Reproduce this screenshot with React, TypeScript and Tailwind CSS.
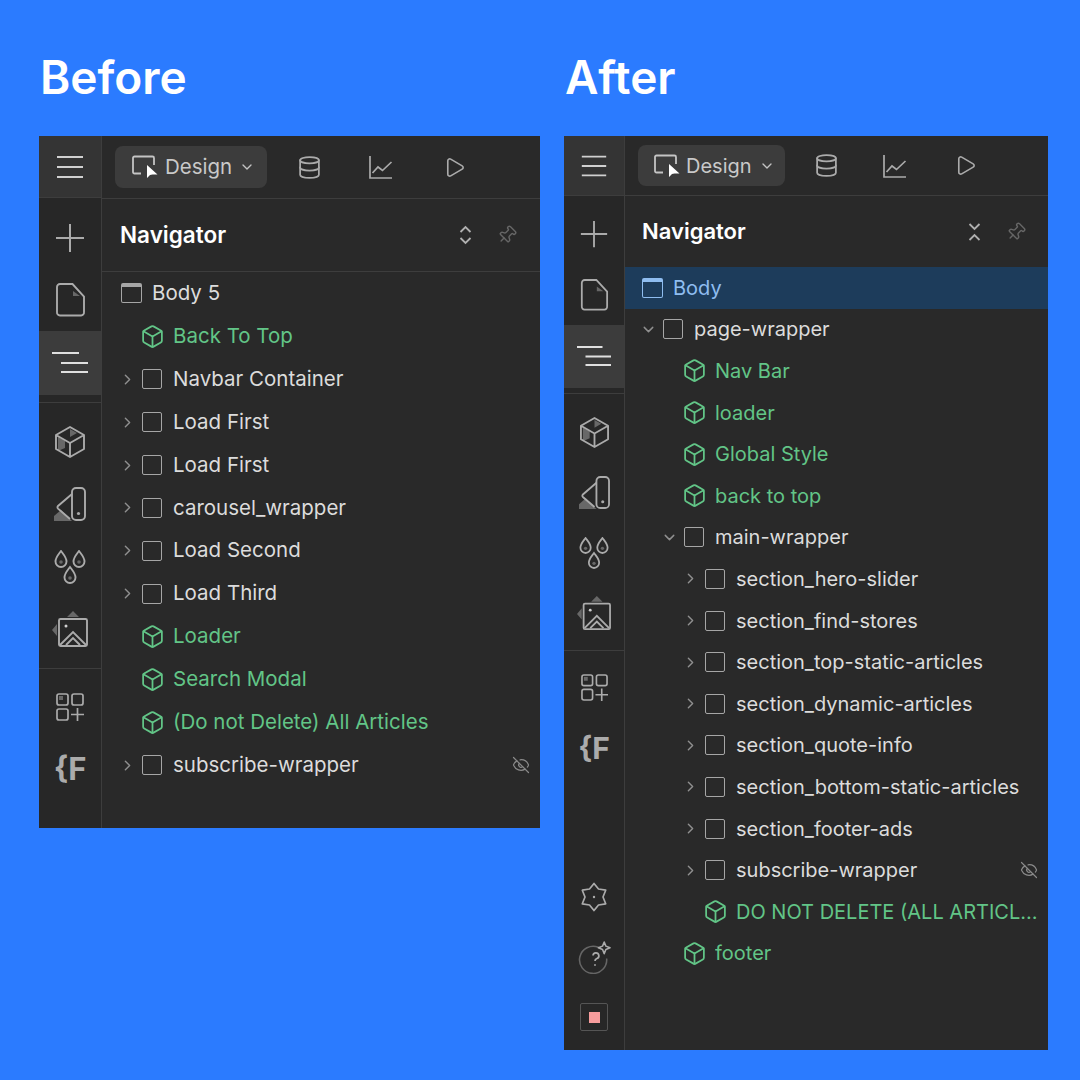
import { Box, ChevronDown, ChevronRight, Database, EyeOff, Pin, Play } from "lucide-react";

type IconProps = { className?: string };

const shade = "#686868";
const line = "#ababab";

const Hamburger = ({ className }: IconProps) => (
	<svg className={className} viewBox="0 0 32 32" fill="none" stroke="#d0d0d0" strokeWidth="2">
		<path d="M3 6h26M3 16h26M3 26h26" />
	</svg>
);

const PlusIcon = ({ className }: IconProps) => (
	<svg className={className} viewBox="0 0 32 32" fill="none" stroke={line} strokeWidth="2">
		<path d="M16 2v28M2 16h28" />
	</svg>
);

const PageIcon = ({ className }: IconProps) => (
	<svg className={className} viewBox="0 0 32 34" fill="none" stroke={line} strokeWidth="1.9">
		<path d="M19 8v5h7z" fill={shade} stroke="none" />
		<path d="M6 1h12.5L30 13.5V29a3 3 0 0 1-3 3.5H6A3 3 0 0 1 3 29V4a3 3 0 0 1 3-3z" />
	</svg>
);

const NavIcon = ({ className }: IconProps) => (
	<svg className={className} viewBox="0 0 36 24" fill="none" stroke="#e0e0e0" strokeWidth="2">
		<path d="M0 2h27M9 12h27M9 21h27" />
	</svg>
);

const CubeIcon = ({ className }: IconProps) => (
	<svg className={className} viewBox="0 0 32 32" fill="none" stroke={line} strokeWidth="1.9" strokeLinejoin="round">
		<path d="M16 3v8l7-4zM4 11l7 4v7l-7 3z" fill={shade} stroke="none" />
		<path d="M16 1l14 8v14l-14 8-14-8V9zM2 9l14 8 14-8M16 17v14" />
	</svg>
);

const SwatchIcon = ({ className }: IconProps) => (
	<svg className={className} viewBox="0 0 32 34" fill="none" stroke={line} strokeWidth="1.9">
		<path d="M0 34v-5l7-6 11 11z" fill={shade} stroke="none" />
		<rect x="18" y="1" width="13" height="32" rx="4" />
		<path d="M18 7L4 19a1.8 1.8 0 0 0 0 2.6L16 32" />
		<circle cx="24.5" cy="26.5" r="1.6" fill={line} stroke="none" />
	</svg>
);

const DropsIcon = ({ className }: IconProps) => {
	const drop = "M0-8C3-4 5.5-1.5 5.5 2.5a5.5 5.5 0 0 1-11 0C-5.5-1.5-3-4 0-8z";
	return (
		<svg className={className} viewBox="0 0 32 34" fill="none" stroke={line} strokeWidth="1.9">
			<path transform="translate(7 9)" d={drop} />
			<path transform="translate(25 9)" d={drop} />
			<path transform="translate(16 25)" d={drop} />
			<circle cx="7" cy="12" r="1.8" fill={shade} stroke="none" />
			<circle cx="25" cy="12" r="1.8" fill={shade} stroke="none" />
			<circle cx="16" cy="28" r="1.8" fill={shade} stroke="none" />
		</svg>
	);
};

const ImageIcon = ({ className }: IconProps) => (
	<svg className={className} viewBox="0 0 36 36" fill="none" stroke={line} strokeWidth="1.9">
		<path d="M5 13L0 19l5 6zM15 6l6-6 6 6z" fill={shade} stroke="none" />
		<rect x="7" y="8" width="28" height="27" rx="1.5" />
		<path d="M8 34l13-13 13 13M14 34l7-7 7 7" />
		<circle cx="14" cy="15" r="1.5" fill="#d0d0d0" stroke="none" />
	</svg>
);

const ComponentsIcon = ({ className }: IconProps) => (
	<svg className={className} viewBox="0 0 28 28" fill="none" stroke={line} strokeWidth="1.7">
		<path d="M3 3h4v4H3z" fill={shade} stroke="none" />
		<rect x="1" y="1" width="11" height="11" rx="2" />
		<rect x="16" y="1" width="11" height="11" rx="2" />
		<rect x="1" y="16" width="11" height="11" rx="2" />
		<path d="M15 21.5h13M21.5 15v13" />
	</svg>
);

const GearIcon = ({ className }: IconProps) => (
	<svg className={className} viewBox="-15 -15 30 30" fill="none" stroke={line} strokeWidth="1.7" strokeLinejoin="round">
		<path d="M0-13.5L4.5-8 11.7-6.8 9 0 11.7 6.8 4.5 8 0 13.5-4.5 8-11.7 6.8-9 0-11.7-6.8-4.5-8z" />
		<circle cx="0" cy="0" r="1.2" fill={line} stroke="none" />
	</svg>
);

const HelpIcon = ({ className }: IconProps) => (
	<svg className={className} viewBox="0 0 34 34" fill="none" stroke="#666666" strokeWidth="1.6">
		<path d="M21 6.5A14 14 0 1 0 29.5 18" />
		<path d="M15.5 15a3 3 0 1 1 4 3c-1.2.5-2 1.2-2 2.7M17.500 24v1.6" stroke={line} strokeWidth="1.8" />
		<path d="M27 1l1.700 4.300L33 7l-4.300 1.700L27 13l-1.700-4.300L21 7l4.300-1.700z" stroke={line} strokeLinejoin="round" />
	</svg>
);

const DesignIcon = ({ className }: IconProps) => (
	<svg className={className} viewBox="0 0 26 24" fill="none" stroke="#c4c4c4" strokeWidth="1.8">
		<path d="M9 18.500H2.500a1.500 1.500 0 0 1-1.500-1.500V3a1.500 1.500 0 0 1 1.500-1.500h18A1.500 1.500 0 0 1 22 3v7" />
		<path d="M15 10v13l3-3 2.500-.5h5z" fill="#ffffff" stroke="none" />
	</svg>
);

const ChartIcon = ({ className }: IconProps) => (
	<svg className={className} viewBox="0 0 24 24" fill="none" stroke={line} strokeWidth="1.7">
		<path d="M1 1v22h22M3.500 18l5.500-6 4.500 3.500L22.500 7" />
	</svg>
);

const ExpandIcon = ({ className }: IconProps) => (
	<svg className={className} viewBox="0 0 16 20" fill="none" stroke="#b0b0b0" strokeWidth="1.8">
		<path d="M3 7l5-5 5 5M3 13l5 5 5-5" />
	</svg>
);

const CollapseIcon = ({ className }: IconProps) => (
	<svg className={className} viewBox="0 0 16 20" fill="none" stroke="#b0b0b0" strokeWidth="1.8">
		<path d="M3 2l5 5 5-5M3 18l5-5 5 5" />
	</svg>
);

const PageGlyph = ({ compact }: { compact: boolean }) => (
	<div
		className={`rounded-[2px] border-[1.5px] border-t-[4px] border-[#a6a6a6] ${
			compact ? "w-[21px] h-[20px]" : "w-[21px] h-[20px]"
		}`}
	/>
);

type Row = {
	label: string;
	depth: 0 | 1 | 2 | 3;
	kind: "body" | "box" | "symbol";
	arrow?: "right" | "down";
	hidden?: boolean;
};

const beforeRows: Row[] = [
	{ label: "Body 5", depth: 0, kind: "body" },
	{ label: "Back To Top", depth: 1, kind: "symbol" },
	{ label: "Navbar Container", depth: 1, kind: "box", arrow: "right" },
	{ label: "Load First", depth: 1, kind: "box", arrow: "right" },
	{ label: "Load First", depth: 1, kind: "box", arrow: "right" },
	{ label: "carousel_wrapper", depth: 1, kind: "box", arrow: "right" },
	{ label: "Load Second", depth: 1, kind: "box", arrow: "right" },
	{ label: "Load Third", depth: 1, kind: "box", arrow: "right" },
	{ label: "Loader", depth: 1, kind: "symbol" },
	{ label: "Search Modal", depth: 1, kind: "symbol" },
	{ label: "(Do not Delete) All Articles", depth: 1, kind: "symbol" },
	{ label: "subscribe-wrapper", depth: 1, kind: "box", arrow: "right", hidden: true },
];

const afterRows: Row[] = [
	{ label: "Body", depth: 0, kind: "body" },
	{ label: "page-wrapper", depth: 1, kind: "box", arrow: "down" },
	{ label: "Nav Bar", depth: 2, kind: "symbol" },
	{ label: "loader", depth: 2, kind: "symbol" },
	{ label: "Global Style", depth: 2, kind: "symbol" },
	{ label: "back to top", depth: 2, kind: "symbol" },
	{ label: "main-wrapper", depth: 2, kind: "box", arrow: "down" },
	{ label: "section_hero-slider", depth: 3, kind: "box", arrow: "right" },
	{ label: "section_find-stores", depth: 3, kind: "box", arrow: "right" },
	{ label: "section_top-static-articles", depth: 3, kind: "box", arrow: "right" },
	{ label: "section_dynamic-articles", depth: 3, kind: "box", arrow: "right" },
	{ label: "section_quote-info", depth: 3, kind: "box", arrow: "right" },
	{ label: "section_bottom-static-articles", depth: 3, kind: "box", arrow: "right" },
	{ label: "section_footer-ads", depth: 3, kind: "box", arrow: "right" },
	{ label: "subscribe-wrapper", depth: 3, kind: "box", arrow: "right", hidden: true },
	{ label: "DO NOT DELETE (ALL ARTICLES)", depth: 3, kind: "symbol" },
	{ label: "footer", depth: 2, kind: "symbol" },
];

const depthClass = {
	0: "pl-[16px]",
	1: "pl-[16px]",
	2: "pl-[37px]",
	3: "pl-[58px]",
};

const NavRow = ({ row, compact }: { row: Row; compact: boolean }) => {
	const active = compact && row.kind === "body";
	const textColor = active ? "text-[#8fbdf0]" : row.kind === "symbol" ? "text-[#62c587]" : "text-[#dcdcdc]";
	return (
		<div
			className={`flex items-center pr-[10px] ${compact ? "h-[41.6px] text-[20px]" : "h-[42.9px] text-[20.5px]"} ${
				compact ? depthClass[row.depth] : "pl-[18px]"
			} ${active ? "bg-[#1d3c5b]" : ""}`}
		>
			{row.depth > 0 && (
				<span className="w-[21px] shrink-0 flex items-center">
					{row.arrow === "right" && <ChevronRight size={17} strokeWidth={2} className="text-[#8f8f8f] -ml-[1px]" />}
					{row.arrow === "down" && <ChevronDown size={17} strokeWidth={2} className="text-[#8f8f8f] -ml-[1px]" />}
				</span>
			)}
			<span className="w-[22px] h-[24px] shrink-0 flex items-center justify-center">
				{row.kind === "body" && <PageGlyphColored active={active} />}
				{row.kind === "box" && <span className="w-[20px] h-[20px] border-[1.5px] border-[#a6a6a6] rounded-[2px]" />}
				{row.kind === "symbol" && <Box size={25} strokeWidth={1.7} className="text-[#62c587] shrink-0" />}
			</span>
			<span className={`ml-[10px] truncate flex-1 ${textColor}`}>{row.label}</span>
			{row.hidden && <EyeOff size={18} strokeWidth={1.6} className="text-[#8a8a8a] shrink-0" />}
		</div>
	);
};

const PageGlyphColored = ({ active }: { active: boolean }) =>
	active ? (
		<div className="w-[21px] h-[20px] rounded-[2px] border-[1.5px] border-t-[4px] border-[#8fbdf0]" />
	) : (
		<PageGlyph compact={false} />
	);

const RailBefore = () => (
	<div className="w-[63px] shrink-0 h-full flex flex-col border-r border-[#3d3d3d] bg-[#272727]">
		<div className="h-[62px] shrink-0 bg-[#343434] flex items-center justify-center border-b border-[#3d3d3d]">
			<Hamburger className="w-[32px] h-[32px]" />
		</div>
		<div className="h-[9px]" />
		<div className="h-[62px] flex items-center justify-center"><PlusIcon className="w-[32px] h-[32px]" /></div>
		<div className="h-[62px] flex items-center justify-center"><PageIcon className="w-[32px] h-[34px]" /></div>
		<div className="h-[64px] bg-[#3c3c3c] flex items-center justify-center"><NavIcon className="w-[36px] h-[24px]" /></div>
		<div className="h-[8px] border-b border-[#3d3d3d]" />
		<div className="h-[8px]" />
		<div className="h-[62px] flex items-center justify-center"><CubeIcon className="w-[32px] h-[32px]" /></div>
		<div className="h-[62px] flex items-center justify-center"><SwatchIcon className="w-[32px] h-[34px]" /></div>
		<div className="h-[63px] flex items-center justify-center"><DropsIcon className="w-[32px] h-[34px]" /></div>
		<div className="h-[62px] flex items-center justify-center"><ImageIcon className="w-[36px] h-[36px]" /></div>
		<div className="h-[9px] border-b border-[#3d3d3d]" />
		<div className="h-[7px]" />
		<div className="h-[62px] flex items-center justify-center"><ComponentsIcon className="w-[28px] h-[28px]" /></div>
		<div className="h-[62px] flex items-center justify-center font-bold text-[31px] text-[#ababab]">{"{F"}</div>
	</div>
);

const RailAfter = () => (
	<div className="w-[61px] shrink-0 h-full flex flex-col border-r border-[#3d3d3d] bg-[#272727]">
		<div className="h-[60px] shrink-0 bg-[#343434] flex items-center justify-center border-b border-[#3d3d3d]">
			<Hamburger className="w-[30px] h-[30px]" />
		</div>
		<div className="h-[8px]" />
		<div className="h-[60px] flex items-center justify-center"><PlusIcon className="w-[30px] h-[30px]" /></div>
		<div className="h-[61px] flex items-center justify-center"><PageIcon className="w-[30px] h-[32px]" /></div>
		<div className="h-[63px] bg-[#3c3c3c] flex items-center justify-center"><NavIcon className="w-[34px] h-[23px]" /></div>
		<div className="h-[6px] border-b border-[#3d3d3d]" />
		<div className="h-[8px]" />
		<div className="h-[60px] flex items-center justify-center"><CubeIcon className="w-[31px] h-[31px]" /></div>
		<div className="h-[61px] flex items-center justify-center"><SwatchIcon className="w-[31px] h-[33px]" /></div>
		<div className="h-[60px] flex items-center justify-center"><DropsIcon className="w-[30px] h-[32px]" /></div>
		<div className="h-[60px] flex items-center justify-center"><ImageIcon className="w-[34px] h-[34px]" /></div>
		<div className="h-[8px] border-b border-[#3d3d3d]" />
		<div className="h-[6px]" />
		<div className="h-[60px] flex items-center justify-center"><ComponentsIcon className="w-[27px] h-[27px]" /></div>
		<div className="h-[62px] flex items-center justify-center font-bold text-[30px] text-[#ababab]">{"{F"}</div>
		<div className="flex-1" />
		<div className="h-[60px] flex items-center justify-center"><GearIcon className="w-[30px] h-[30px]" /></div>
		<div className="h-[61px] flex items-center justify-center"><HelpIcon className="w-[33px] h-[33px]" /></div>
		<div className="h-[62px] flex items-start justify-center pt-[1px]">
			<div className="w-[28px] h-[28px] mt-[14px] rounded-[2px] border-[1.5px] border-[#555555] flex items-center justify-center">
				<div className="w-[11px] h-[11px] bg-[#f79c9c]" />
			</div>
		</div>
	</div>
);

const TopBar = ({ compact }: { compact: boolean }) => (
	<div className={`flex items-center shrink-0 border-b border-[#3d3d3d] ${compact ? "h-[60px] pl-[13px]" : "h-[63px] pl-[13px]"}`}>
		<div
			className={`flex items-center rounded-[8px] bg-[#3c3c3c] ${
				compact ? "w-[147px] h-[41px] pl-[16px]" : "w-[152px] h-[42px] pl-[17px]"
			}`}
		>
			<DesignIcon className="w-[26px] h-[24px] shrink-0" />
			<span className={`text-[#c9c9c9] ${compact ? "ml-[6px] text-[20px]" : "ml-[7px] text-[20.5px]"}`}>Design</span>
			<ChevronDown size={16} strokeWidth={2} className="ml-[7px] text-[#c4c4c4]" />
		</div>
		<Database size={25} strokeWidth={1.7} className={`text-[#ababab] ${compact ? "ml-[29px]" : "ml-[30px]"}`} />
		<ChartIcon className={`w-[24px] h-[24px] ${compact ? "ml-[44px]" : "ml-[47px]"}`} />
		<Play size={23} strokeWidth={1.7} className={`text-[#ababab] ${compact ? "ml-[47px]" : "ml-[50px]"}`} />
	</div>
);

const Header = ({ compact }: { compact: boolean }) => (
	<div
		className={`flex items-center justify-between shrink-0 ${
			compact ? "h-[71px] pl-[17px] pr-[22px]" : "h-[73px] pl-[18px] pr-[23px] border-b border-[#3d3d3d]"
		}`}
	>
		<span className={`font-semibold text-white ${compact ? "text-[22px]" : "text-[22.5px]"}`}>Navigator</span>
		<div className="flex items-center gap-[23px]">
			{compact ? <CollapseIcon className="w-[17px] h-[20px]" /> : <ExpandIcon className="w-[17px] h-[20px]" />}
			<Pin size={20} strokeWidth={1.7} className="text-[#666666] rotate-45" />
		</div>
	</div>
);

const Panel = ({ rows, compact }: { rows: Row[]; compact: boolean }) => (
	<div className={`flex bg-[#292929] font-['Inter',sans-serif] ${compact ? "w-[484px] h-[914px]" : "w-[501px] h-[692px]"}`}>
		{compact ? <RailAfter /> : <RailBefore />}
		<div className="flex-1 min-w-0 flex flex-col">
			<TopBar compact={compact} />
			<Header compact={compact} />
			<div>
				{rows.map((row, index) => (
					// eslint-disable-next-line react/no-array-index-key
					<NavRow key={index} row={row} compact={compact} />
				))}
			</div>
		</div>
	</div>
);

const App = () => (
	<div className="w-[1080px] h-[1080px] bg-[#2b7bff] flex items-start pl-[39px] gap-[24px] font-['Inter',sans-serif]">
		<div className="flex flex-col">
			<h1 className="h-[136px] pt-[49px] pl-[1px] text-[46px] leading-[56px] font-semibold text-white">Before</h1>
			<Panel rows={beforeRows} compact={false} />
		</div>
		<div className="flex flex-col">
			<h1 className="h-[136px] pt-[49px] pl-[1px] text-[46px] leading-[56px] font-semibold text-white">After</h1>
			<Panel rows={afterRows} compact />
		</div>
	</div>
);

export default App;
